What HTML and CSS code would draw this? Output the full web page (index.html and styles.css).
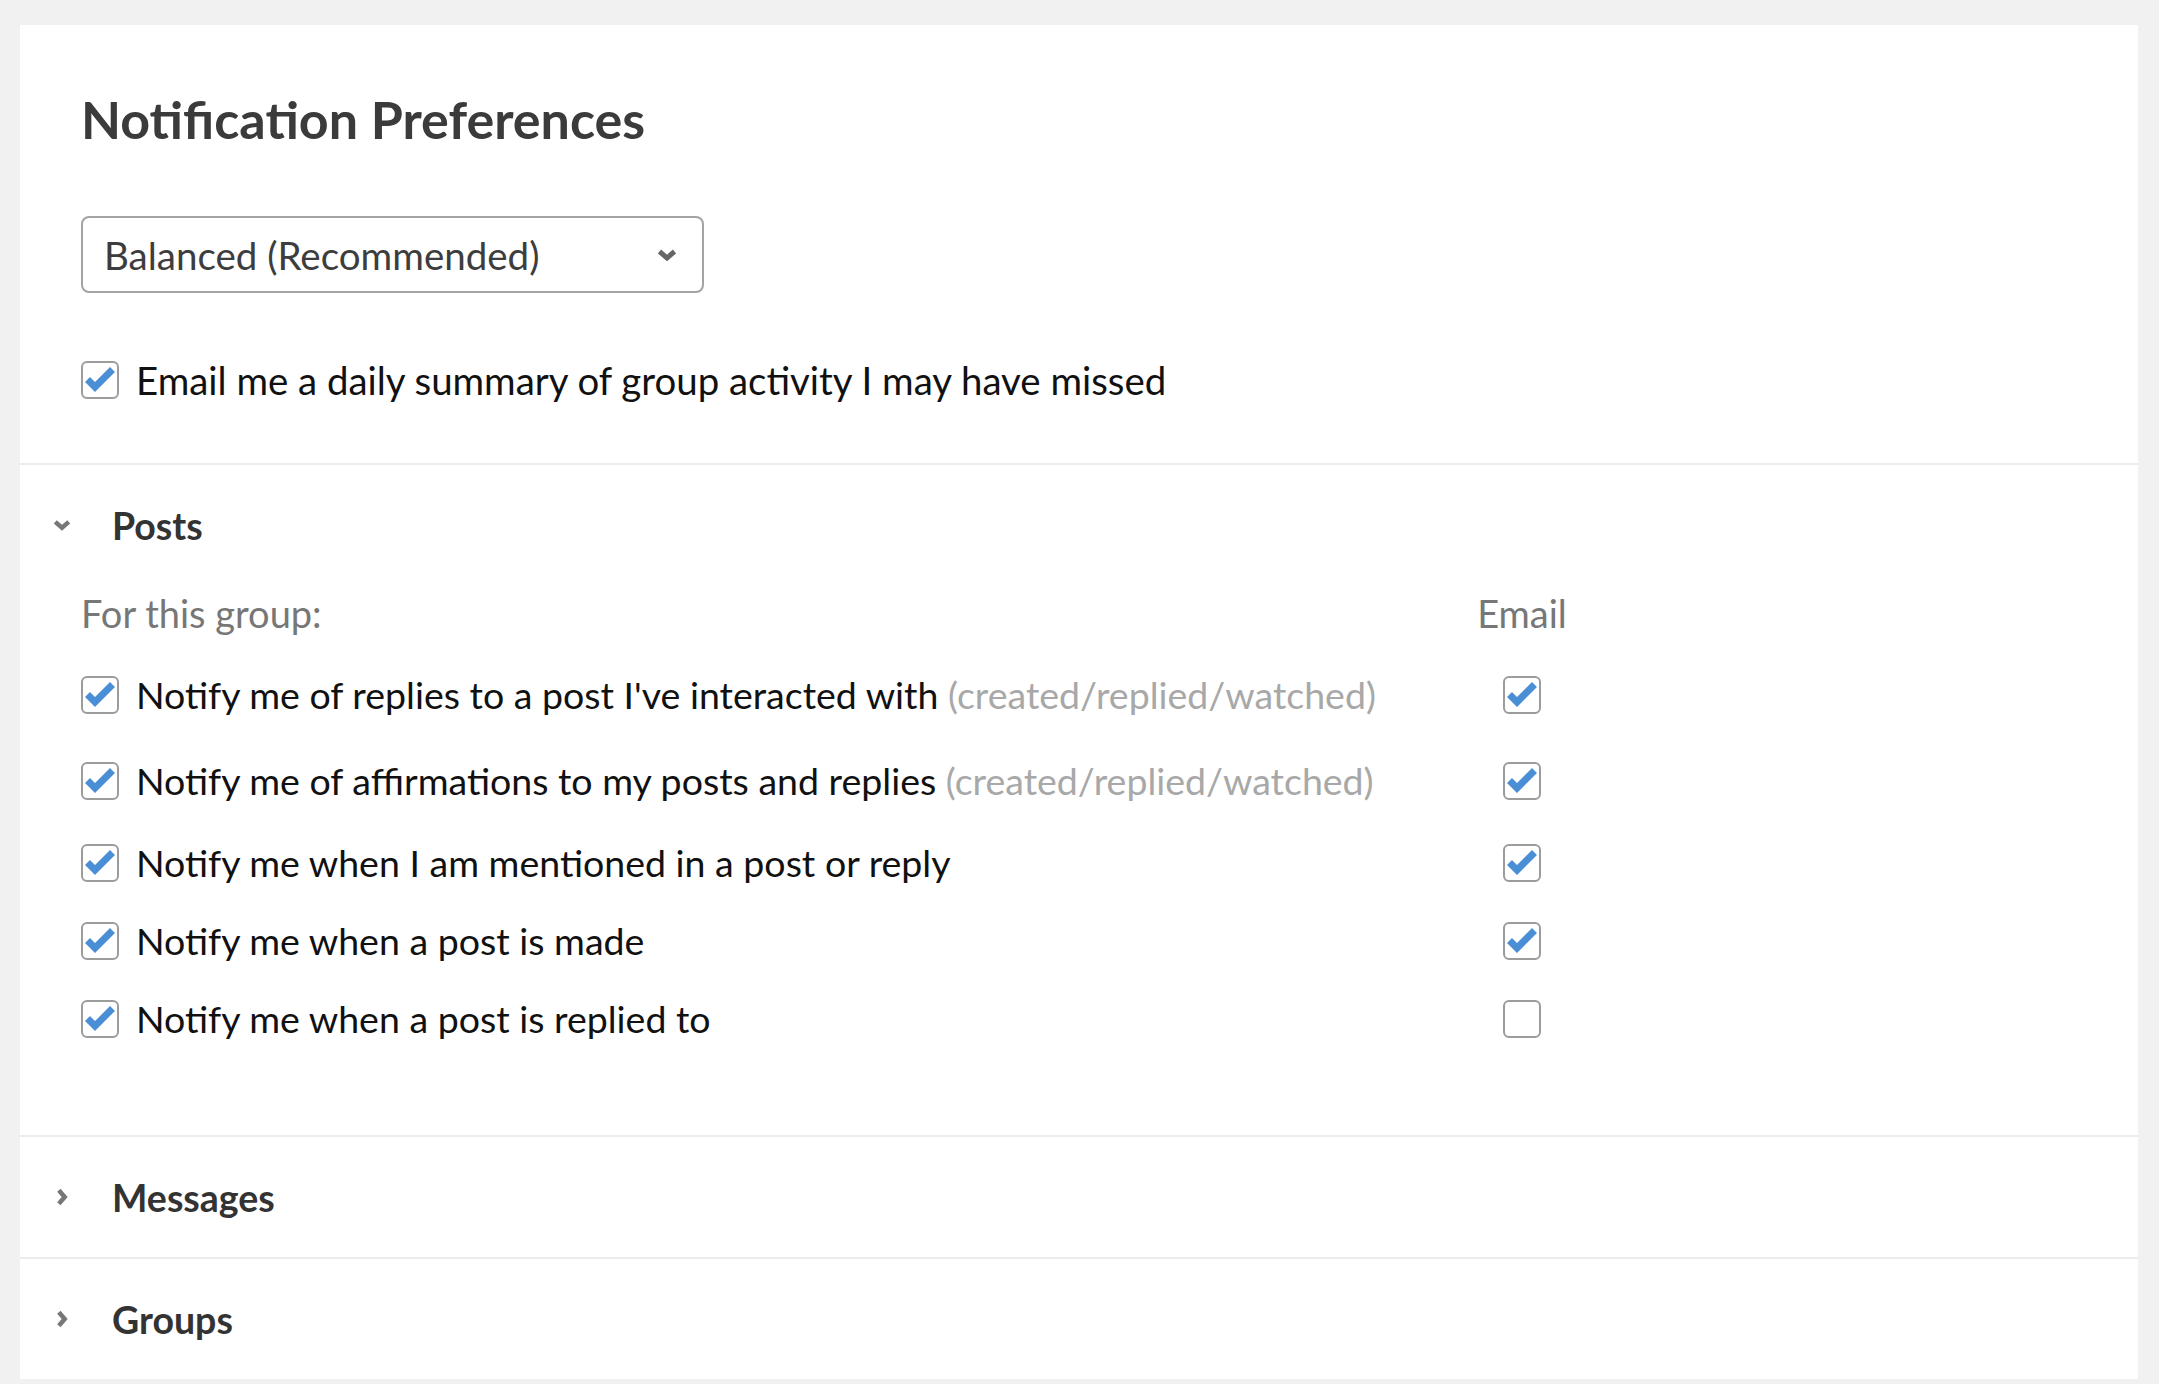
FILE: index.html
```html
<!DOCTYPE html>
<html lang="en">
<head>
  <meta charset="UTF-8" />
  <title>Notification Preferences</title>
  <link rel="stylesheet" href="styles.css">
</head>
<body>
<div class="page">
  <div class="card">
    <div class="top">
      <h1>Notification Preferences</h1>
      <div class="select">
        <span>Balanced (Recommended)</span>
        <svg class="select-caret" width="20" height="12" viewBox="0 0 20 12"><path d="M2.5 2.5 L10 9 L17.5 2.5" /></svg>
      </div>
      <label class="check summary">
        <span class="box"><svg viewBox="0 0 38 38"><path d="M6.5 18.5 L14 26 L31.5 8.5" /></svg></span>
        <span>Email me a daily summary of group activity I may have missed</span>
      </label>
    </div>

    <div class="section">
      <div class="section-head">
        <svg class="caret" width="18" height="12" viewBox="0 0 20 12"><path d="M2.5 2.5 L10 9 L17.5 2.5" /></svg>
        <h2>Posts</h2>
      </div>
      <div class="section-body">
        <div class="row col-head">
          <div class="col-label">For this group:</div>
          <div class="col-email">Email</div>
        </div>

        <div class="row has-note">
          <label class="check col-label">
            <span class="box"><svg viewBox="0 0 38 38"><path d="M6.5 18.5 L14 26 L31.5 8.5" /></svg></span>
            <span>Notify me of replies to a post I've interacted with <span class="note">(created/replied/watched)</span></span>
          </label>
          <div class="col-email">
            <span class="box"><svg viewBox="0 0 38 38"><path d="M6.5 18.5 L14 26 L31.5 8.5" /></svg></span>
          </div>
        </div>

        <div class="row has-note">
          <label class="check col-label">
            <span class="box"><svg viewBox="0 0 38 38"><path d="M6.5 18.5 L14 26 L31.5 8.5" /></svg></span>
            <span>Notify me of affirmations to my posts and replies <span class="note">(created/replied/watched)</span></span>
          </label>
          <div class="col-email">
            <span class="box"><svg viewBox="0 0 38 38"><path d="M6.5 18.5 L14 26 L31.5 8.5" /></svg></span>
          </div>
        </div>

        <div class="row">
          <label class="check col-label">
            <span class="box"><svg viewBox="0 0 38 38"><path d="M6.5 18.5 L14 26 L31.5 8.5" /></svg></span>
            <span>Notify me when I am mentioned in a post or reply</span>
          </label>
          <div class="col-email">
            <span class="box"><svg viewBox="0 0 38 38"><path d="M6.5 18.5 L14 26 L31.5 8.5" /></svg></span>
          </div>
        </div>

        <div class="row">
          <label class="check col-label">
            <span class="box"><svg viewBox="0 0 38 38"><path d="M6.5 18.5 L14 26 L31.5 8.5" /></svg></span>
            <span>Notify me when a post is made</span>
          </label>
          <div class="col-email">
            <span class="box"><svg viewBox="0 0 38 38"><path d="M6.5 18.5 L14 26 L31.5 8.5" /></svg></span>
          </div>
        </div>

        <div class="row">
          <label class="check col-label">
            <span class="box"><svg viewBox="0 0 38 38"><path d="M6.5 18.5 L14 26 L31.5 8.5" /></svg></span>
            <span>Notify me when a post is replied to</span>
          </label>
          <div class="col-email">
            <span class="box"></span>
          </div>
        </div>
      </div>
    </div>

    <div class="section">
      <div class="section-head">
        <svg class="caret side" width="12" height="18" viewBox="0 0 12 20"><path d="M2.5 2.5 L9 10 L2.5 17.5" /></svg>
        <h2>Messages</h2>
      </div>
    </div>

    <div class="section">
      <div class="section-head">
        <svg class="caret side" width="12" height="18" viewBox="0 0 12 20"><path d="M2.5 2.5 L9 10 L2.5 17.5" /></svg>
        <h2>Groups</h2>
      </div>
    </div>
  </div>
</div>
</body>
</html>
```

FILE: styles.css
```css
* {
  box-sizing: border-box;
}

body {
  margin: 0;
  font-family: 'Lato', 'Open Sans', sans-serif;
  background: #f1f1f1;
  color: #111;
}

.page {
  padding: 25px 21px 5px 20px;
}

.card {
  background: #fff;
}

.top {
  padding: 61px 61px 64px;
}

h1 {
  margin: 0;
  font-size: 52px;
  line-height: 66px;
  font-weight: 700;
  color: #3b3b3b;
}

.select {
  margin-top: 64px;
  width: 623px;
  height: 77px;
  border: 2px solid #a3a3a3;
  border-radius: 8px;
  display: flex;
  align-items: center;
  justify-content: space-between;
  padding: 0 25px 0 21px;
  font-size: 38.5px;
  color: #3d3d3d;
}

.select-caret path,
.caret path {
  fill: none;
  stroke: #666;
  stroke-width: 5;
}

.caret path {
  stroke: #777;
  stroke-width: 5;
}

.check {
  display: flex;
  align-items: center;
  gap: 17px;
  font-size: 37.5px;
  line-height: 38px;
  white-space: nowrap;
}

.summary {
  margin-top: 68px;
  font-size: 38.4px;
}

.box {
  width: 38px;
  height: 38px;
  flex: none;
  display: inline-block;
  border: 2px solid #9c9c9c;
  border-radius: 6px;
  background: #fff;
}

.box svg {
  display: block;
  width: 38px;
  height: 38px;
  margin: -2px 0 0 -2px;
  overflow: visible;
}

.box path {
  fill: none;
  stroke: #4a8fd6;
  stroke-width: 7;
}

.note {
  color: #a8a8a8;
}

.section {
  border-top: 2px solid #ececec;
}

.section-head {
  height: 120px;
  display: flex;
  align-items: center;
  padding-left: 33px;
}

.section-head .caret {
  width: 18px;
  flex: none;
}

.section-head .caret.side {
  margin-left: 3px;
  width: 12px;
  margin-right: 3px;
}

h2 {
  margin: 0 0 0 41px;
  font-size: 37.5px;
  font-weight: 700;
  color: #333;
}

.section-body {
  padding: 0 61px 77px;
}

.row {
  display: flex;
  align-items: center;
  min-height: 78px;
}

.row.has-note {
  min-height: 86px;
}

.row.col-head {
  min-height: 56px;
  margin-bottom: 11px;
  font-size: 38px;
  color: #777;
}

.col-label {
  width: 1375px;
  flex: none;
}

.col-email {
  width: 132px;
  flex: none;
  display: flex;
  justify-content: center;
}
```
